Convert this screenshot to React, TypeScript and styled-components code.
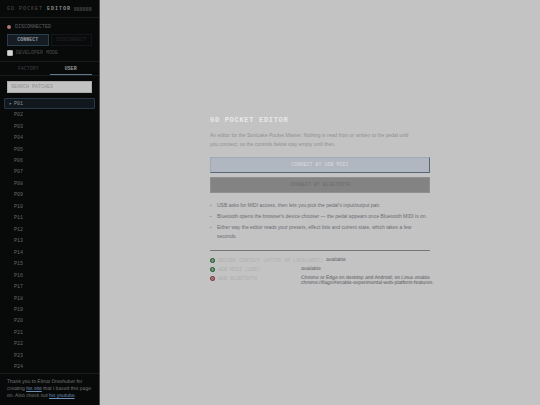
import React, { useState } from "react";
import styled, { createGlobalStyle } from "styled-components";

const mono = `"Liberation Mono", monospace`;
const sans = `"Liberation Sans", Arial, sans-serif`;

const GlobalStyle = createGlobalStyle`
  *, *::before, *::after { box-sizing: border-box; }
  body { margin: 0; background: #c3c3c3; font-family: ${sans}; }
  button, input { font: inherit; margin: 0; }
  ul, ol, dl, dd, h1, h2, p { margin: 0; padding: 0; }
`;

const Page = styled.div`
  display: flex;
  height: 100vh;
  overflow: hidden;
`;

const Sidebar = styled.aside`
  display: flex;
  flex-direction: column;
  flex: 0 0 100px;
  background: #080909;
  border-right: 1px solid #4a4b4c;
  color: #5c5f62;
  font: 5px/6px ${mono};
`;

const Brand = styled.header`
  display: flex;
  align-items: center;
  justify-content: space-between;
  height: 18px;
  padding: 0 7px;
  border-bottom: 1px solid #181c20;
`;

const BrandName = styled.h2`
  font: 5px/6px ${mono};
  letter-spacing: 1px;
  white-space: nowrap;
  color: #4c4f52;

  strong { color: #8c8e90; }
`;

const Meter = styled.span`
  width: 18px;
  height: 4px;
  background: repeating-linear-gradient(90deg, #2c2e30 0 2px, #1c1e20 2px 3px);
`;

const Connection = styled.section`
  display: flex;
  flex-direction: column;
  gap: 4px;
  height: 44px;
  padding: 5px 7px 0;
  border-bottom: 1px solid #181c20;
`;

const Status = styled.p`
  display: flex;
  align-items: center;
  gap: 4px;
  height: 7px;
`;

const StatusDot = styled.i`
  width: 4px;
  height: 4px;
  border-radius: 50%;
  background: #b27872;
`;

const ButtonRow = styled.div`
  display: grid;
  grid-template-columns: 1fr 1fr;
  gap: 2px;
`;

const SideButton = styled.button<{ $primary?: boolean }>`
  height: 12px;
  padding: 0;
  border: 1px solid ${(p) => (p.$primary ? "#2c3d4d" : "#121619")};
  background: ${(p) => (p.$primary ? "#151c24" : "#090a0b")};
  color: ${(p) => (p.$primary ? "#92979d" : "#24272a")};
  font-weight: ${(p) => (p.$primary ? 700 : 400)};
  line-height: 6px;
`;

const CheckLabel = styled.label`
  display: flex;
  align-items: center;
  gap: 3px;
  color: #484b4e;

  input {
    appearance: none;
    width: 6px;
    height: 6px;
    border: 1px solid #b5b5b5;
    border-radius: 1px;
    background: #d6d6d6;
  }
`;

const Tabs = styled.div`
  display: grid;
  grid-template-columns: 1fr 1fr;
  height: 14px;
  padding: 0 7px;
  border-bottom: 1px solid #181c20;
`;

const Tab = styled.button<{ $active: boolean }>`
  padding: 1px 0 0;
  border: 0;
  border-bottom: 1px solid ${(p) => (p.$active ? "#65788e" : "transparent")};
  background: none;
  color: ${(p) => (p.$active ? "#929598" : "#3c3f42")};
  font-weight: ${(p) => (p.$active ? 700 : 400)};
`;

const SearchRow = styled.div`
  display: flex;
  padding: 5px 7px;
`;

const Search = styled.input`
  flex: 1;
  min-width: 0;
  height: 12px;
  padding: 0 3px;
  border: 1px solid #aaaaaa;
  border-radius: 0;
  background: #c3c3c3;
  color: #444444;

  &::placeholder { color: #929292; opacity: 1; }
`;

const PatchList = styled.ol`
  display: grid;
  grid-auto-rows: 1fr;
  flex: 1;
  min-height: 0;
  padding: 0 4px;
  list-style: none;
`;

const Patch = styled.button<{ $active: boolean }>`
  display: grid;
  grid-template-columns: 5px 1fr;
  align-items: center;
  width: 100%;
  height: 100%;
  padding: 0 4px;
  border: 1px solid ${(p) => (p.$active ? "#293846" : "transparent")};
  border-radius: 1px;
  background: ${(p) => (p.$active ? "#10171d" : "none")};
  color: ${(p) => (p.$active ? "#8b9094" : "#65686b")};
  text-align: left;
`;

const Credit = styled.footer`
  padding: 5px 2px 5px 7px;
  border-top: 1px solid #181c20;
  color: #74777a;
  font: 5px/7px ${sans};
  text-rendering: geometricPrecision;

  a { color: #6b8fb5; }
`;

const Main = styled.main`
  display: flex;
  flex: 1;
  align-items: center;
  justify-content: center;
  background: #c3c3c3;
`;

const Welcome = styled.section`
  display: flex;
  flex-direction: column;
  width: 50%;
  padding-bottom: 5px;
`;

const Title = styled.h1`
  color: #e8e8e8;
  font: 700 7px/10px ${mono};
  letter-spacing: 0.1em;
`;

const Intro = styled.p`
  margin: 6px 0 8px;
  padding-right: 14px;
  color: #8f9195;
  font-size: 5px;
  line-height: 9px;
`;

const ConnectButton = styled.button<{ $muted?: boolean }>`
  height: 16px;
  margin-bottom: 4px;
  border: 1px solid;
  border-color: ${(p) => (p.$muted ? "#909090" : "#9faab8 #586777 #586777 #9faab8")};
  background: ${(p) => (p.$muted ? "#838383" : "#b1b7c0")};
  color: ${(p) => (p.$muted ? "#6c6c6c" : "#d7dade")};
  font: 5px/6px ${mono};
`;

const Notes = styled.ul`
  display: flex;
  flex-direction: column;
  gap: 2px;
  margin: 4px 0 9px;
  list-style: none;
  color: #6a6d72;
  font-size: 5px;
  line-height: 9px;

  li { display: grid; grid-template-columns: 7px 1fr; }
  li::before { content: "▪"; color: #8e9094; }
`;

const Checks = styled.dl`
  display: flex;
  flex-direction: column;
  gap: 3px;
  padding-top: 7px;
  border-top: 1px solid #777777;
`;

const Check = styled.div`
  display: flex;
  gap: 3px;
  margin-right: -8px;
  line-height: 5px;

  svg { flex: none; width: 5px; height: 5px; }
  dt { min-width: 80px; color: #afb0b2; font: 5px/6px ${mono}; white-space: nowrap; }
  dd { color: #55585c; font-size: 5px; line-height: 5px; text-rendering: geometricPrecision; }
`;

const checks = [
  { name: "SECURE CONTEXT (HTTPS OR LOCALHOST)", ok: true, text: "available" },
  { name: "WEB MIDI (USB)", ok: true, text: "available" },
  {
    name: "WEB BLUETOOTH",
    ok: false,
    text: "Chrome or Edge on desktop and Android; on Linux enable chrome://flags/#enable-experimental-web-platform-features.",
  },
];

const patches = Array.from({ length: 24 }, (_, i) => `P${String(i + 1).padStart(2, "0")}`);

function CheckIcon({ ok }: { ok: boolean }) {
  const color = ok ? "#2c6338" : "#85363a";
  return (
    <svg viewBox="0 0 10 10" aria-hidden="true">
      <circle cx="5" cy="5" r="3.7" fill="#aab2aa" stroke={color} strokeWidth="2.6" />
      <path d={ok ? "M3 5 4.5 6.5 7 3.7" : "M3.5 3.5 6.5 6.5 M6.5 3.5 3.5 6.5"} fill="none" stroke={color} strokeWidth="1" />
    </svg>
  );
}

export default function App() {
  const [tab, setTab] = useState("USER");
  const [patch, setPatch] = useState("P01");
  return (
    <Page>
      <GlobalStyle />
      <Sidebar>
        <Brand>
          <BrandName>GD POCKET <strong>EDITOR</strong></BrandName>
          <Meter />
        </Brand>
        <Connection>
          <Status><StatusDot />DISCONNECTED</Status>
          <ButtonRow>
            <SideButton $primary>CONNECT</SideButton>
            <SideButton disabled>DISCONNECT</SideButton>
          </ButtonRow>
          <CheckLabel><input type="checkbox" />DEVELOPER MODE</CheckLabel>
        </Connection>
        <Tabs role="tablist">
          {["FACTORY", "USER"].map((name) => (
            <Tab key={name} role="tab" aria-selected={tab === name} $active={tab === name} onClick={() => setTab(name)}>{name}</Tab>
          ))}
        </Tabs>
        <SearchRow>
          <Search type="text" aria-label="Search patches" placeholder="SEARCH PATCHES" />
        </SearchRow>
        <PatchList>
          {patches.map((name) => (
            <li key={name}>
              <Patch $active={patch === name} onClick={() => setPatch(name)}>
                <span>{patch === name ? "▸" : ""}</span>
                <span>{name}</span>
              </Patch>
            </li>
          ))}
        </PatchList>
        <Credit>
          Thank you to Elmar Drexhuber for creating <a href="#site">his site</a> that I based this page on. Also check out <a href="#youtube">his youtube</a>.
        </Credit>
      </Sidebar>
      <Main>
        <Welcome>
          <Title>GD POCKET EDITOR</Title>
          <Intro>An editor for the Sonicake Pocket Master. Nothing is read from or written to the pedal until you connect, so the controls below stay empty until then.</Intro>
          <ConnectButton>CONNECT BY USB MIDI</ConnectButton>
          <ConnectButton $muted disabled>CONNECT BY BLUETOOTH</ConnectButton>
          <Notes>
            <li>USB asks for MIDI access, then lets you pick the pedal's input/output pair.</li>
            <li>Bluetooth opens the browser's device chooser — the pedal appears once Bluetooth MIDI is on.</li>
            <li>Either way the editor reads your presets, effect lists and current state, which takes a few seconds.</li>
          </Notes>
          <Checks>
            {checks.map((c) => (
              <Check key={c.name}>
                <CheckIcon ok={c.ok} />
                <dt>{c.name}</dt>
                <dd>{c.text}</dd>
              </Check>
            ))}
          </Checks>
        </Welcome>
      </Main>
    </Page>
  );
}
